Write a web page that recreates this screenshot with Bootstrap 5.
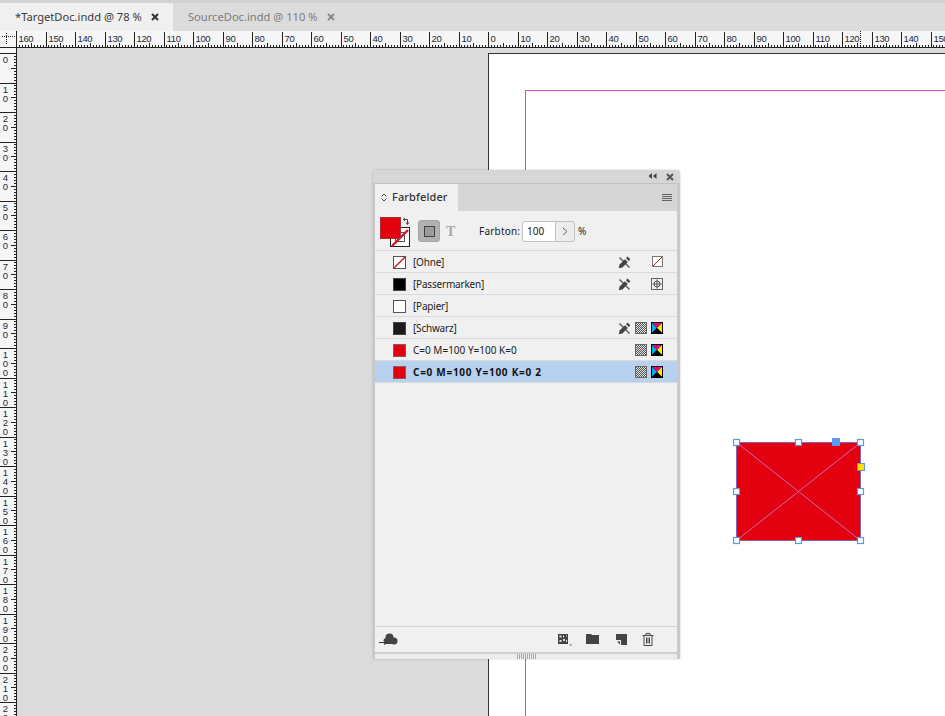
<!DOCTYPE html>
<html lang="de">
<head>
<meta charset="utf-8">
<title>Farbfelder</title>
<link href="https://cdn.jsdelivr.net/npm/bootstrap@5.3.0/dist/css/bootstrap.min.css" rel="stylesheet">
<style>
html,body{height:100%;overflow:hidden}
body{background:#dbdbdb;font-family:"Noto Sans","Liberation Sans",sans-serif;color:#222;font-size:10px}
.app-root{width:945px;height:716px;border-top:3px solid #d2d2d2}
.tabbar{height:28px;background:#dcdcdc;flex:none}
.doc-tab{font-size:11.15px;height:28px;padding-left:15px;color:#7c7c7c;white-space:nowrap}
.doc-tab.is-active{background:#f0f0f0;color:#3a3a3a;width:173px}
.doc-x{margin-left:9px}
.ruler-row{height:17px;flex:none;background:#f6f6f6}
.corner{width:17px;flex:none}
.ruler-h{flex:1}
.ruler-v{width:17px;flex:none;background:#f6f6f6}
.ruler-font{font-family:"Liberation Sans",sans-serif;font-size:9.5px;fill:#1c2a3a;letter-spacing:-.35px}
.ruler-font-v{font-family:"Liberation Sans",sans-serif;font-size:9.5px;fill:#1c2a3a;writing-mode:vertical-rl;text-orientation:upright;letter-spacing:-2px}
.workspace{flex:1;min-height:0}
.canvas-area{flex:1;background:#dbdbdb;position:relative;overflow:hidden}
.sheet{position:absolute;left:471px;top:5px;width:500px;height:700px;background:#fff;border-left:1px solid #333;border-top:1px solid #333}
.guide{position:absolute;left:36px;top:36px;width:500px;height:700px;border-left:1px solid #c94fd0;border-top:1px solid #c94fd0}
.frame{position:absolute;left:716px;top:390px}
.swatch-panel{position:absolute;left:356px;top:122px;width:307px;height:489px;background:#c9c9c9;border-radius:4px 4px 0 0;padding:0 3px 0 2px;box-shadow:0 0 2px rgba(0,0,0,.25)}
.title-strip{height:13px;background:#d6d6d6;margin:0 -3px 0 -2px;border-radius:4px 4px 0 0;gap:9px;padding-right:6px}
.tab-strip{height:28px;background:#d6d6d6;border-top:1px solid #c2c2c2}
.panel-tab{width:83px;background:#f0f0f0;font-size:11px;font-weight:500;color:#333;gap:5px;padding-left:6px;letter-spacing:.1px}
.menu-lines{margin-right:5px}
.panel-body{flex:1;min-height:0;background:#f0f0f0}
.tone-row{height:40px;padding-top:1px;flex:none;position:relative;border-bottom:1px solid #d9d9d9}
.tone-well{width:35px;height:40px;margin-left:3px;padding-top:3px}
.mode-btn{width:22px;height:22px;padding:0;background:#b1b1b1;border:1px solid #a5a5a5;border-radius:3px;margin-left:5px}
.mode-btn:hover{background:#b1b1b1;border-color:#a5a5a5}
.mode-t{font-family:"Liberation Serif",serif;font-size:14px;font-weight:700;color:#a8a8a8;width:39px;padding-left:6px}
.tone-label{font-size:10px;width:43px;color:#222;letter-spacing:.2px}
.tone-group{width:54px;height:21px;flex:none}
.tone-group .form-control{font-size:10px;height:21px;min-height:21px;padding:0 0 0 4px;border-color:#c2c2c2;border-radius:3px 0 0 3px;box-shadow:none;color:#222;width:34px;flex:none}
.tone-group .btn{width:20px;height:21px;padding:0;background:#ececec;border-color:#c2c2c2;border-radius:0 3px 3px 0;display:flex;align-items:center;justify-content:center}
.tone-pct{margin-left:2px;font-size:10px}
.swatch-list{flex:1;min-height:0;background:#f0f0f0;border-radius:0}
.swatch-list .swatch-item.swatch-item{height:22px;padding:1px 13px 0 18px;background:#f0f0f0;border-color:#dadada;border-width:0 0 1px;font-size:10px;color:#222;letter-spacing:-.2px}
.name-code{letter-spacing:0}
.swatch-list .swatch-item.is-chosen{background:#b7d1ee;font-weight:700;color:#111;border-color:#dadada}
.is-chosen .name-code{letter-spacing:.72px}
.chip{width:13px;height:13px;border:1px solid #555;flex:none;margin-right:7px;display:block}
.chip-red{background:#e3000f;border-color:#8c5a5e}
.chip-black{background:#000;border-color:#444}
.chip-dark{background:#1b1b1b;border-color:#444}
.chip-white{background:#fff}
.item-icons{margin-left:auto;gap:3px}
.icon-slot{width:13px;height:13px;display:block;flex:none}
.pen-slot{margin-right:1px}
.icon-gap{width:13px;flex:none}
.panel-foot{height:26px;flex:none;border-top:1px solid #d4d4d4;background:#f0f0f0;padding-left:4px}
.foot-right{margin-left:auto;margin-right:23px}
.foot-a{margin-right:14px}
.foot-b{margin-right:16px}
.foot-c{margin-right:14px}
.grip-strip{height:7px;flex:none;background:#ececec;border-top:2px solid #cfcfcf;border-bottom:0}
.grip-inner{margin:0 auto}
svg{display:block}
</style>
</head>
<body>
<div class="app-root d-flex flex-column">
  <div class="tabbar d-flex">
    <div class="doc-tab is-active d-flex align-items-center"><span>*TargetDoc.indd @ 78 %</span><svg class="doc-x" width="8" height="8" viewBox="0 0 8 8"><path d="M1 1L7 7M7 1L1 7" stroke="#333" stroke-width="2"/></svg></div>
    <div class="doc-tab d-flex align-items-center"><span>SourceDoc.indd @ 110 %</span><svg class="doc-x" width="8" height="8" viewBox="0 0 8 8"><path d="M1 1L7 7M7 1L1 7" stroke="#8a8a8a" stroke-width="2"/></svg></div>
  </div>
  <div class="ruler-row d-flex">
    <div class="corner"><svg width="17" height="17"><path d="M0 16.5H17M16.5 0V17" stroke="#222"/><path d="M2 5.5H16M6.5 2V14" stroke="#222" stroke-dasharray="1 1"/></svg></div>
    <div class="ruler-h"><svg id="rh" width="928" height="17"></svg></div>
  </div>
  <div class="workspace d-flex">
    <div class="ruler-v"><svg id="rv" width="17" height="669"></svg></div>
    <div class="canvas-area">
      <div class="sheet"><div class="guide"></div></div>
      <div class="frame">
        <svg width="136" height="108" viewBox="0 0 136 108">
          <rect x="3.5" y="4.5" width="124" height="98" fill="#e3000f" stroke="#8a62ac"/>
          <path d="M3.5 4.5L127.5 102.5M127.5 4.5L3.5 102.5" stroke="#c06cbc" stroke-width="1"/>
          <g fill="#fff" stroke="#5b9bd5" stroke-width="1.2">
            <rect x=".5" y="1.5" width="6" height="6"/><rect x="62.5" y="1.5" width="6" height="6"/><rect x="124.5" y="1.5" width="6" height="6"/>
            <rect x=".5" y="50.5" width="6" height="6"/><rect x="124.5" y="50.5" width="6" height="6"/>
            <rect x=".5" y="99.5" width="6" height="6"/><rect x="62.5" y="99.5" width="6" height="6"/><rect x="124.5" y="99.5" width="6" height="6"/>
          </g>
          <rect x="99" y="0" width="8" height="8" fill="#5b9bf5"/>
          <rect x="124.5" y="25.5" width="7" height="7" fill="#ffdd00" stroke="#5b9bd5"/>
        </svg>
      </div>
      <div class="swatch-panel d-flex flex-column">
        <div class="title-strip d-flex align-items-center justify-content-end">
          <svg width="9" height="7" viewBox="0 0 9 7"><path d="M4 0V6L0.5 3ZM8.5 0V6L5 3Z" fill="#444"/></svg>
          <svg width="8" height="8" viewBox="0 0 8 8"><path d="M1 1L7 7M7 1L1 7" stroke="#555" stroke-width="2"/></svg>
        </div>
        <div class="tab-strip d-flex justify-content-between align-items-stretch">
          <div class="panel-tab d-flex align-items-center">
            <svg width="6" height="9" viewBox="0 0 6 9"><path d="M.7 3.3L3 1L5.3 3.3M.7 5.7L3 8L5.3 5.7" fill="none" stroke="#444"/></svg>
            <span>Farbfelder</span>
          </div>
          <div class="menu-lines d-flex align-items-center">
            <svg width="10" height="7" viewBox="0 0 10 7"><path d="M0 .5H10M0 2.5H10M0 4.5H10M0 6.5H10" stroke="#666"/></svg>
          </div>
        </div>
        <div class="panel-body d-flex flex-column">
          <div class="tone-row d-flex align-items-center">
            <div class="tone-well">
              <svg width="34" height="36" viewBox="0 0 34 36">
                <rect x="12.5" y="13.5" width="19" height="19" fill="#fff" stroke="#222"/>
                <rect x="17.5" y="18.5" width="9" height="9" fill="none" stroke="#555"/>
                <path d="M14 32L30 16" stroke="#d8141f" stroke-width="2.4"/>
                <rect x="2.5" y="3.5" width="20" height="21" fill="#e3000f" stroke="#a5333b"/>
                <path d="M25.5 5.5H29.5V9" fill="none" stroke="#444"/><path d="M27.5 8.5H31.5L29.5 11ZM27 3.5V7.5L25 5.5Z" fill="#444"/>
              </svg>
            </div>
            <button type="button" class="btn mode-btn d-flex align-items-center justify-content-center">
              <svg width="11" height="11" viewBox="0 0 11 11"><rect x=".5" y=".5" width="10" height="10" fill="#9c9c9c" stroke="#444"/></svg>
            </button>
            <span class="mode-t">T</span>
            <span class="tone-label">Farbton:</span>
            <div class="input-group tone-group flex-nowrap">
              <input class="form-control" value="100" aria-label="Farbton">
              <button type="button" class="btn" aria-label="Menü"><svg width="6" height="9" viewBox="0 0 6 9"><path d="M1 1L5 4.5L1 8" fill="none" stroke="#666"/></svg></button>
            </div>
            <span class="tone-pct">%</span>
          </div>
          <ul id="list" class="list-group list-group-flush swatch-list">
            <li class="list-group-item swatch-item d-flex align-items-center"><svg class="chip border-0" viewBox="0 0 13 13"><rect x=".5" y=".5" width="12" height="12" fill="#fff" stroke="#555"/><path d="M1 12L12 1" stroke="#d8141f" stroke-width="1.5"/></svg><span>[Ohne]</span><span class="item-icons d-flex align-items-center"><svg class="icon-slot pen-slot"><use href="#i-lock"/></svg><span class="icon-gap"></span><svg class="icon-slot"><use href="#i-none"/></svg></span></li>
            <li class="list-group-item swatch-item d-flex align-items-center"><span class="chip chip-black"></span><span>[Passermarken]</span><span class="item-icons d-flex align-items-center"><svg class="icon-slot pen-slot"><use href="#i-lock"/></svg><span class="icon-gap"></span><svg class="icon-slot"><use href="#i-reg"/></svg></span></li>
            <li class="list-group-item swatch-item d-flex align-items-center"><span class="chip chip-white"></span><span>[Papier]</span></li>
            <li class="list-group-item swatch-item d-flex align-items-center"><span class="chip chip-dark"></span><span>[Schwarz]</span><span class="item-icons d-flex align-items-center"><svg class="icon-slot pen-slot"><use href="#i-lock"/></svg><svg class="icon-slot"><use href="#i-hatch"/></svg><svg class="icon-slot"><use href="#i-cmyk"/></svg></span></li>
            <li class="list-group-item swatch-item d-flex align-items-center"><span class="chip chip-red"></span><span class="name-code">C=0 M=100 Y=100 K=0</span><span class="item-icons d-flex align-items-center"><svg class="icon-slot"><use href="#i-hatch"/></svg><svg class="icon-slot"><use href="#i-cmyk"/></svg></span></li>
            <li class="list-group-item swatch-item is-chosen d-flex align-items-center"><span class="chip chip-red"></span><span class="name-code">C=0 M=100 Y=100 K=0 2</span><span class="item-icons d-flex align-items-center"><svg class="icon-slot"><use href="#i-hatch"/></svg><svg class="icon-slot"><use href="#i-cmyk"/></svg></span></li>
          </ul>
          <div class="panel-foot d-flex align-items-center">
            <svg width="19" height="14" viewBox="0 0 19 14"><g fill="#444"><circle cx="10.5" cy="4.5" r="4"/><circle cx="7.5" cy="8" r="3"/><circle cx="15" cy="8" r="3.5"/><rect x="7.5" y="6" width="7.5" height="5"/></g><path d="M0 9.5H7" stroke="#f0f0f0" stroke-width="3"/><path d="M0 9.5H7M5 7.5L7.5 9.5L5 11.5" fill="none" stroke="#333" stroke-width="1.2"/></svg>
            <div class="foot-right d-flex align-items-center">
              <svg class="foot-a" width="14" height="12" viewBox="0 0 14 12"><path d="M0 0H10V10H0Z" fill="#444"/><path d="M1.5 1.5h2v2h-2zM5 5h2v2H5zM1.5 6h2v2h-2zM5 1.5h1v2H5zM8 6h1v2H8zM8 1.5h1v1H8z" fill="#ddd"/><path d="M11.5 10.5H14L12.75 12Z" fill="#555"/></svg>
              <svg class="foot-b" width="14" height="11" viewBox="0 0 14 11"><path d="M0 0H5L6 1H13V10H0Z" fill="#444"/></svg>
              <svg class="foot-c" width="12" height="11" viewBox="0 0 12 11"><path d="M0 0H11V11H5V6H0Z" fill="#444"/><path d="M1 7.5H4V10.5Z" fill="#444"/></svg>
              <svg width="12" height="13" viewBox="0 0 12 13"><path d="M.5 2.5H11.5M4 2.5V.5H8V2.5M2 2.5V12.5H10V2.5M4.5 4.5V10.5M6 4.5V10.5M7.5 4.5V10.5" fill="none" stroke="#444"/></svg>
            </div>
          </div>
        </div>
        <div class="grip-strip">
          <svg class="grip-inner" width="20" height="5" viewBox="0 0 20 5"><path d="M1.5 0V5M3.5 0V5M5.5 0V5M7.5 0V5M9.5 0V5M11.5 0V5M13.5 0V5M15.5 0V5M17.5 0V5M19.5 0V5" stroke="#a8a8a8"/></svg>
        </div>
      </div>
    </div>
  </div>
</div>
<svg width="0" height="0" class="position-absolute">
  <defs>
    <pattern id="chk" width="2" height="2" patternUnits="userSpaceOnUse"><rect width="2" height="2" fill="#e2e2e2"/><rect width="1" height="1" fill="#555"/><rect x="1" y="1" width="1" height="1" fill="#555"/></pattern>
    <symbol id="i-lock" viewBox="0 0 13 13"><path d="M1.5 1.5L11.5 11.5" stroke="#666" stroke-width="1.6"/><path d="M.8 12.2L1.6 8.6L7 3.2L9.8 6L4.4 11.4Z" fill="#444"/><path d="M8 2.2L9.6 .6L12.4 3.4L10.8 5Z" fill="#444"/></symbol>
    <symbol id="i-none" viewBox="0 0 13 13"><rect x="1.5" y=".5" width="10" height="10" fill="#fff" stroke="#777"/><path d="M2 10L11 1" stroke="#d8141f"/></symbol>
    <symbol id="i-reg" viewBox="0 0 13 13"><rect x=".5" y=".5" width="11" height="11" fill="none" stroke="#666"/><circle cx="6" cy="6" r="3" fill="none" stroke="#555"/><path d="M6 1.5V10.5M1.5 6H10.5" stroke="#555"/></symbol>
    <symbol id="i-hatch" viewBox="0 0 13 13"><rect x=".5" y=".5" width="11" height="11" fill="url(#chk)" stroke="#666"/></symbol>
    <symbol id="i-cmyk" viewBox="0 0 13 13"><rect width="12" height="12" fill="#000"/><path d="M1 1H11L6 6Z" fill="#e6007e"/><path d="M1 1V11L6 6Z" fill="#00aeef"/><path d="M11 1V11L6 6Z" fill="#ffed00"/><path d="M1 11H11L6 6Z" fill="#000"/></symbol>
  </defs>
</svg>
<script>
(function(){
  var NS='http://www.w3.org/2000/svg',u=2.95;
  function el(p,n,a,t){var e=document.createElementNS(NS,n);for(var k in a)e.setAttribute(k,a[k]);if(t!==undefined)e.textContent=t;p.appendChild(e);return e;}
  var rh=document.getElementById('rh'),d='M0 16.5H928';
  var ox=488-17;
  for(var i=-160;i<=155;i++){
    var x=Math.round(ox+i*u)+.5;
    if(i%10===0&&x<928)el(rh,'text',{x:x+2,y:11,'class':'ruler-font'},String(Math.abs(i)));
    if(x<0||x>928)continue;
    var len=(i%10===0)?15:(i%5===0)?4:2;
    d+='M'+x+' 16V'+(16-len);
  }
  el(rh,'path',{d:d,stroke:'#222','stroke-width':1,fill:'none','shape-rendering':'crispEdges'});
  el(rh,'path',{d:'M843.5 0V16',stroke:'#222','stroke-dasharray':'1 1','shape-rendering':'crispEdges'});
  var rv=document.getElementById('rv');d='M16.5 0V669';
  var oy=53-48;
  for(var j=0;j<=225;j++){
    var y=Math.round(oy+j*u)+.5;if(y>669)continue;
    var l=(j%10===0)?16:(j%5===0)?5:2;
    d+='M16 '+y+'H'+(16-l);
    if(j%10===0)el(rv,'text',{x:5.5,y:y,'class':'ruler-font-v'},String(j));
  }
  el(rv,'path',{d:d,stroke:'#222','stroke-width':1,fill:'none','shape-rendering':'crispEdges'});
})();
</script>
<script src="https://cdn.jsdelivr.net/npm/bootstrap@5.3.0/dist/js/bootstrap.bundle.min.js"></script>
</body>
</html>
